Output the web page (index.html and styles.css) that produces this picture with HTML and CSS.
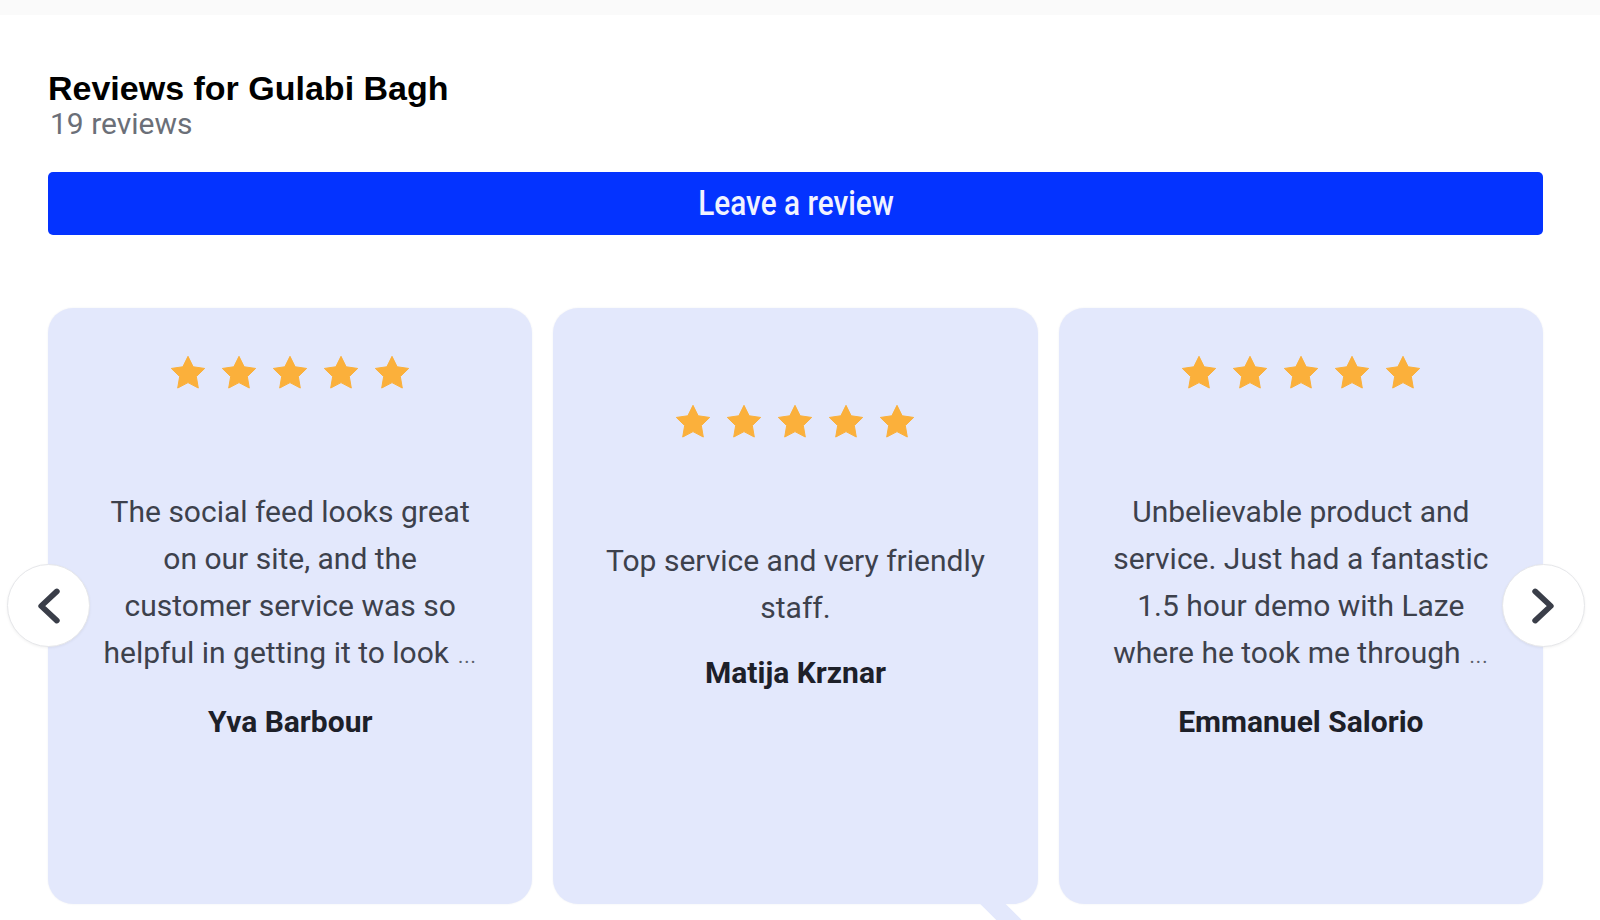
FILE: index.html
```html
<!DOCTYPE html>
<html lang="en">
<head>
<meta charset="utf-8">
<title>Reviews for Gulabi Bagh</title>
<link rel="stylesheet" href="styles.css">
</head>
<body>
<div class="topbar"></div>
<main class="wrap">
  <header class="head">
    <h1 class="title">Reviews for Gulabi Bagh</h1>
    <div class="count">19 reviews</div>
  </header>
  <button class="leave"><span class="leave-label">Leave a review</span></button>

  <section class="carousel">
    <div class="cards">
      <article class="card">
        <div class="stars">
          <svg viewBox="0 0 24 24"><path d="M12 2l3.09 6.26L22 9.27l-5 4.87 1.18 6.88L12 17.77l-6.18 3.25L7 14.14 2 9.27l6.91-1.01z"/></svg>
          <svg viewBox="0 0 24 24"><path d="M12 2l3.09 6.26L22 9.27l-5 4.87 1.18 6.88L12 17.77l-6.18 3.25L7 14.14 2 9.27l6.91-1.01z"/></svg>
          <svg viewBox="0 0 24 24"><path d="M12 2l3.09 6.26L22 9.27l-5 4.87 1.18 6.88L12 17.77l-6.18 3.25L7 14.14 2 9.27l6.91-1.01z"/></svg>
          <svg viewBox="0 0 24 24"><path d="M12 2l3.09 6.26L22 9.27l-5 4.87 1.18 6.88L12 17.77l-6.18 3.25L7 14.14 2 9.27l6.91-1.01z"/></svg>
          <svg viewBox="0 0 24 24"><path d="M12 2l3.09 6.26L22 9.27l-5 4.87 1.18 6.88L12 17.77l-6.18 3.25L7 14.14 2 9.27l6.91-1.01z"/></svg>
        </div>
        <p class="text">The social feed looks great on our site, and the customer service was so helpful in getting it to look<span class="more">...</span></p>
        <div class="name">Yva Barbour</div>
      </article>

      <article class="card card-tail">
        <div class="stars">
          <svg viewBox="0 0 24 24"><path d="M12 2l3.09 6.26L22 9.27l-5 4.87 1.18 6.88L12 17.77l-6.18 3.25L7 14.14 2 9.27l6.91-1.01z"/></svg>
          <svg viewBox="0 0 24 24"><path d="M12 2l3.09 6.26L22 9.27l-5 4.87 1.18 6.88L12 17.77l-6.18 3.25L7 14.14 2 9.27l6.91-1.01z"/></svg>
          <svg viewBox="0 0 24 24"><path d="M12 2l3.09 6.26L22 9.27l-5 4.87 1.18 6.88L12 17.77l-6.18 3.25L7 14.14 2 9.27l6.91-1.01z"/></svg>
          <svg viewBox="0 0 24 24"><path d="M12 2l3.09 6.26L22 9.27l-5 4.87 1.18 6.88L12 17.77l-6.18 3.25L7 14.14 2 9.27l6.91-1.01z"/></svg>
          <svg viewBox="0 0 24 24"><path d="M12 2l3.09 6.26L22 9.27l-5 4.87 1.18 6.88L12 17.77l-6.18 3.25L7 14.14 2 9.27l6.91-1.01z"/></svg>
        </div>
        <p class="text">Top service and very friendly staff.</p>
        <div class="name">Matija Krznar</div>
      </article>

      <article class="card">
        <div class="stars">
          <svg viewBox="0 0 24 24"><path d="M12 2l3.09 6.26L22 9.27l-5 4.87 1.18 6.88L12 17.77l-6.18 3.25L7 14.14 2 9.27l6.91-1.01z"/></svg>
          <svg viewBox="0 0 24 24"><path d="M12 2l3.09 6.26L22 9.27l-5 4.87 1.18 6.88L12 17.77l-6.18 3.25L7 14.14 2 9.27l6.91-1.01z"/></svg>
          <svg viewBox="0 0 24 24"><path d="M12 2l3.09 6.26L22 9.27l-5 4.87 1.18 6.88L12 17.77l-6.18 3.25L7 14.14 2 9.27l6.91-1.01z"/></svg>
          <svg viewBox="0 0 24 24"><path d="M12 2l3.09 6.26L22 9.27l-5 4.87 1.18 6.88L12 17.77l-6.18 3.25L7 14.14 2 9.27l6.91-1.01z"/></svg>
          <svg viewBox="0 0 24 24"><path d="M12 2l3.09 6.26L22 9.27l-5 4.87 1.18 6.88L12 17.77l-6.18 3.25L7 14.14 2 9.27l6.91-1.01z"/></svg>
        </div>
        <p class="text">Unbelievable product and service. Just had a fantastic 1.5 hour demo with Laze where he took me through<span class="more">...</span></p>
        <div class="name">Emmanuel Salorio</div>
      </article>
    </div>

    <button class="nav nav-prev" aria-label="Previous">
      <svg viewBox="0 0 24 36"><polyline points="20,4 5,18 20,32"/></svg>
    </button>
    <button class="nav nav-next" aria-label="Next">
      <svg viewBox="0 0 24 36"><polyline points="4,4 19,18 4,32"/></svg>
    </button>
  </section>
</main>
</body>
</html>
```

FILE: styles.css
```css
html, body {
  margin: 0;
  padding: 0;
  height: 100%;
  overflow: hidden;
  background: #ffffff;
}

body {
  font-family: Roboto, "Noto Sans", Arial, sans-serif;
}

.topbar {
  height: 15px;
  background: #fafafa;
}

.wrap {
  width: 1495px;
  margin-left: 48px;
}

.head {
  margin-top: 54px;
}

.title {
  margin: 0;
  font-family: "Liberation Sans", Arial, sans-serif;
  font-weight: 700;
  font-size: 34px;
  line-height: 38px;
  color: #000000;
}

.count {
  margin-left: 2px;
  font-family: Roboto, sans-serif;
  font-size: 30px;
  line-height: 34px;
  color: #6b6f78;
}

.leave {
  display: flex;
  align-items: center;
  justify-content: center;
  width: 100%;
  height: 63px;
  margin-top: 31px;
  padding: 0;
  border: 0;
  border-radius: 5px;
  background: #0433ff;
  cursor: pointer;
}

.leave-label {
  display: inline-block;
  font-family: Roboto, sans-serif;
  font-weight: 500;
  font-size: 35px;
  line-height: 40px;
  color: #f1f3ff;
  transform: scaleX(0.85);
}

.carousel {
  position: relative;
  margin-top: 73px;
}

.cards {
  display: grid;
  grid-template-columns: repeat(3, 1fr);
  column-gap: 21px;
}

.card {
  position: relative;
  box-sizing: border-box;
  height: 596px;
  padding: 20px 50px 137px;
  display: flex;
  flex-direction: column;
  justify-content: center;
  align-items: center;
  background: #e3e8fc;
  border-radius: 25px;
  box-shadow: 0 0 2px rgba(40, 50, 120, 0.08);
  text-align: center;
}

.card-tail::after {
  content: "";
  position: absolute;
  left: 437px;
  bottom: -36px;
  width: 18px;
  height: 60px;
  background: #e3e8fc;
  transform: rotate(-45deg);
}

.stars {
  display: flex;
  gap: 11px;
  height: 40px;
  margin-bottom: 95px;
}

.stars svg {
  width: 40px;
  height: 40px;
  fill: #fbb03b;
  stroke: #fbb03b;
  stroke-width: 0.6;
  stroke-linejoin: round;
}

.text {
  margin: 0;
  font-size: 30px;
  line-height: 47px;
  color: #3d414c;
}

.more {
  margin-left: 9px;
  font-size: 20px;
  letter-spacing: 1px;
  color: #5b5f6a;
}

.name {
  margin-top: 22px;
  font-size: 30px;
  line-height: 40px;
  font-weight: 700;
  color: #1d2029;
}

.nav {
  position: absolute;
  top: 50%;
  width: 83px;
  height: 83px;
  margin-top: -42px;
  padding: 0;
  display: flex;
  align-items: center;
  justify-content: center;
  background: #ffffff;
  border: 1px solid #e6e7ea;
  border-radius: 50%;
  box-shadow: 0 1px 3px rgba(0, 0, 0, 0.06);
  cursor: pointer;
}

.nav-prev {
  left: -41px;
}

.nav-next {
  right: -42px;
}

.nav svg {
  width: 25px;
  height: 38px;
  fill: none;
  stroke: #3a3e49;
  stroke-width: 5.5;
  stroke-linecap: round;
  stroke-linejoin: round;
}
```
